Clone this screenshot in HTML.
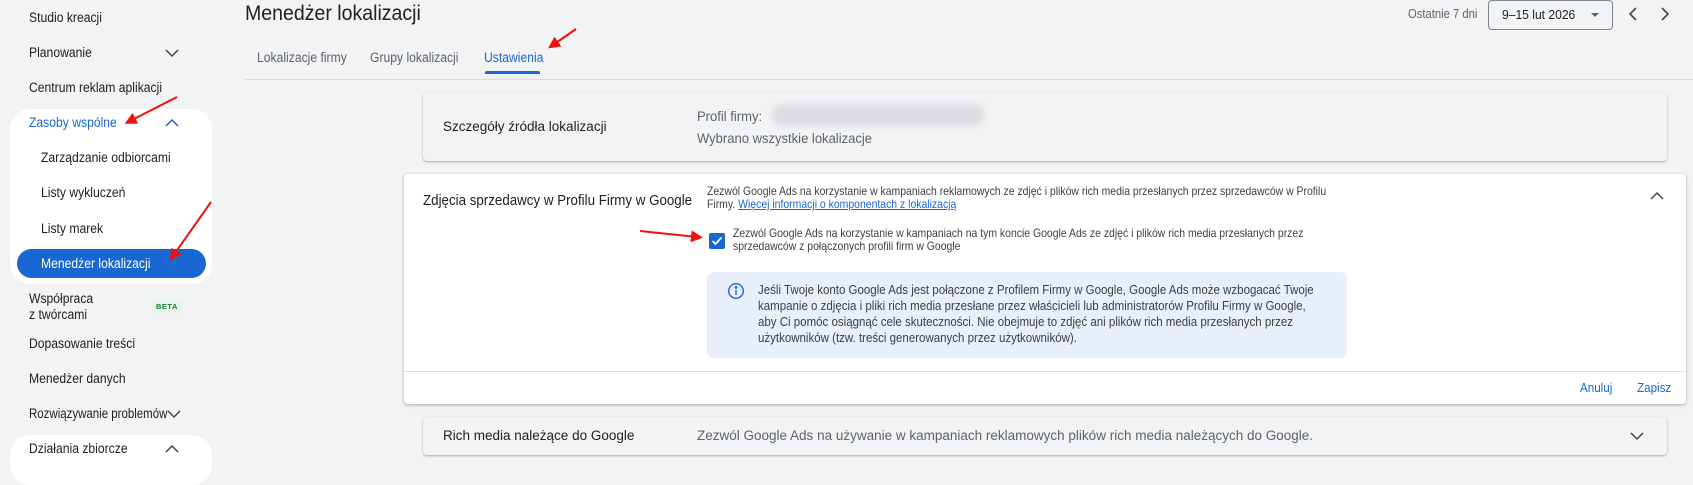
<!DOCTYPE html>
<html><head><meta charset="utf-8"><style>
*{box-sizing:border-box;margin:0;padding:0}
body{width:1693px;height:466px;overflow:hidden;background:#f1f3f4;font-family:"Liberation Sans",sans-serif;color:#202124;position:relative}
.a{position:absolute;white-space:nowrap}
.nav{font-size:13.5px;color:#202124;left:29px;line-height:16px}
.nav span,.c{display:inline-block;transform-origin:left center}
.nav span{transform:scaleX(.9)}
</style></head><body>
<!-- sidebar -->
<div class="a" style="left:10px;top:109px;width:202px;height:175px;background:#fff;border-radius:20px"></div>
<div class="a" style="left:10px;top:435px;width:202px;height:50px;background:#fff;border-radius:20px"></div>
<div class="a" style="left:17px;top:249px;width:189px;height:29px;background:#1967d2;border-radius:15px"></div>
<div class="a nav" style="top:10px"><span>Studio kreacji</span></div>
<div class="a nav" style="top:45px"><span>Planowanie</span></div>
<div class="a nav" style="top:80px"><span>Centrum reklam aplikacji</span></div>
<div class="a nav" style="top:115px;color:#1967d2"><span>Zasoby wspólne</span></div>
<div class="a nav" style="top:150px;left:41px"><span>Zarządzanie odbiorcami</span></div>
<div class="a nav" style="top:185px;left:41px"><span>Listy wykluczeń</span></div>
<div class="a nav" style="top:221px;left:41px"><span>Listy marek</span></div>
<div class="a nav" style="top:256px;left:41px;color:#fff"><span>Menedżer lokalizacji</span></div>
<div class="a nav" style="top:291px"><span>Współpraca</span></div>
<div class="a nav" style="top:307px"><span>z twórcami</span></div>
<div class="a" style="left:152px;top:300px;font-size:7.5px;color:#188038;background:#e6f4ea;padding:2px 4px;font-weight:bold;letter-spacing:.5px">BETA</div>
<div class="a nav" style="top:336px"><span>Dopasowanie treści</span></div>
<div class="a nav" style="top:371px"><span>Menedżer danych</span></div>
<div class="a nav" style="top:406px"><span style="transform:scaleX(.85)">Rozwiązywanie problemów</span></div>
<div class="a nav" style="top:441px"><span>Działania zbiorcze</span></div>
<svg class="a" style="left:0;top:0" width="220" height="466" fill="none" stroke="#444" stroke-width="1.5">
<path d="M166 50l6 6 6-6"/><path d="M168 411l6 6 6-6"/>
<path d="M166 126l6-6 6 6" stroke="#1967d2"/><path d="M166 452l6-6 6 6"/>
</svg>
<!-- header -->
<div class="a" style="left:245px;top:2px;font-size:21px;color:#202124"><span class="c" style="transform:scaleX(.93)">Menedżer lokalizacji</span></div>
<div class="a" style="left:257px;top:50px;font-size:13.5px;color:#5f6368"><span class="c" style="transform:scaleX(.9)">Lokalizacje firmy</span></div>
<div class="a" style="left:370px;top:50px;font-size:13.5px;color:#5f6368"><span class="c" style="transform:scaleX(.9)">Grupy lokalizacji</span></div>
<div class="a" style="left:484px;top:50px;font-size:13.5px;color:#1967d2"><span class="c" style="transform:scaleX(.9)">Ustawienia</span></div>
<div class="a" style="left:485px;top:71px;width:55px;height:3px;background:#1967d2;border-radius:2px 2px 0 0"></div>
<div class="a" style="left:245px;top:79px;width:1448px;height:1px;background:#dadce0"></div>
<div class="a" style="left:1408px;top:7px;font-size:12.5px;color:#5f6368"><span class="c" style="transform:scaleX(.9)">Ostatnie 7 dni</span></div>
<div class="a" style="left:1488px;top:0;width:125px;height:30px;border:1px solid #80868b;border-radius:4px"></div>
<div class="a" style="left:1502px;top:7px;font-size:13px"><span class="c" style="transform:scaleX(.93)">9–15 lut 2026</span></div>
<svg class="a" style="left:1580px;top:0" width="113" height="30" fill="none" stroke="#444" stroke-width="1.6">
<path d="M11 13l4 4 4-4z" fill="#5f6368" stroke="none"/>
<path d="M56 8l-6 6 6 6"/><path d="M82 8l6 6-6 6"/>
</svg>
<!-- card 1 -->
<div class="a" style="left:423px;top:93px;width:1244px;height:68px;background:#f1f3f4;border-radius:4px;box-shadow:0 1px 2px rgba(0,0,0,.3)"></div>
<div class="a" style="left:443px;top:119px;font-size:13.5px">Szczegóły źródła lokalizacji</div>
<div class="a" style="left:697px;top:108px;font-size:14px;color:#5f6368"><span class="c" style="transform:scaleX(.93)">Profil firmy:</span></div>
<div class="a" style="left:772px;top:104px;width:212px;height:22px;background:#dcdde0;border-radius:11px;filter:blur(3px)"></div>
<div class="a" style="left:697px;top:130px;font-size:14px;color:#5f6368"><span class="c" style="transform:scaleX(.93)">Wybrano wszystkie lokalizacje</span></div>
<!-- card 2 -->
<div class="a" style="left:404px;top:174px;width:1282px;height:230px;background:#fff;border-radius:4px;box-shadow:0 1px 3px rgba(0,0,0,.3)"></div>
<div class="a" style="left:423px;top:193px;font-size:14.5px"><span class="c" style="transform:scaleX(.92)">Zdjęcia sprzedawcy w Profilu Firmy w Google</span></div>
<div class="a" style="left:707px;top:185px;font-size:12px;line-height:13px;color:#3c4043"><span class="c" style="transform:scaleX(.87)">Zezwól Google Ads na korzystanie w kampaniach reklamowych ze zdjęć i plików rich media przesłanych przez sprzedawców w Profilu<br>Firmy. <span style="color:#1967d2;text-decoration:underline">Więcej informacji o komponentach z lokalizacją</span></span></div>
<div class="a" style="left:709px;top:233px;width:16px;height:16px;background:#1967d2;border-radius:2px"></div>
<svg class="a" style="left:709px;top:233px" width="16" height="16" fill="none" stroke="#fff" stroke-width="1.8"><path d="M3.5 8l3 3 6-6.5"/></svg>
<div class="a" style="left:733px;top:227px;font-size:12px;line-height:13px;color:#3c4043"><span class="c" style="transform:scaleX(.87)">Zezwól Google Ads na korzystanie w kampaniach na tym koncie Google Ads ze zdjęć i plików rich media przesłanych przez<br>sprzedawców z połączonych profili firm w Google</span></div>
<div class="a" style="left:707px;top:272px;width:640px;height:86px;background:#e8effb;border-radius:7px"></div>
<svg class="a" style="left:727px;top:282px" width="18" height="18" fill="none" stroke="#1967d2" stroke-width="1.4"><circle cx="9" cy="9" r="7.3"/><path d="M9 8v5"/><circle cx="9" cy="5.5" r=".7" fill="#1967d2"/></svg>
<div class="a" style="left:758px;top:282px;font-size:12.5px;line-height:16px;color:#3c4043"><span class="c" style="transform:scaleX(.92)">Jeśli Twoje konto Google Ads jest połączone z Profilem Firmy w Google, Google Ads może wzbogacać Twoje<br>kampanie o zdjęcia i pliki rich media przesłane przez właścicieli lub administratorów Profilu Firmy w Google,<br>aby Ci pomóc osiągnąć cele skuteczności. Nie obejmuje to zdjęć ani plików rich media przesłanych przez<br>użytkowników (tzw. treści generowanych przez użytkowników).</span></div>
<div class="a" style="left:404px;top:371px;width:1282px;height:1px;background:#e0e0e0"></div>
<div class="a" style="left:1580px;top:381px;font-size:12.5px;color:#1967d2"><span class="c" style="transform:scaleX(.93)">Anuluj</span></div>
<div class="a" style="left:1637px;top:381px;font-size:12.5px;color:#1967d2"><span class="c" style="transform:scaleX(.93)">Zapisz</span></div>
<svg class="a" style="left:1647px;top:186px" width="20" height="20" fill="none" stroke="#444" stroke-width="1.5"><path d="M4 13l6-6 6 6"/></svg>
<!-- card 3 -->
<div class="a" style="left:423px;top:417px;width:1244px;height:38px;background:#f1f3f4;border-radius:4px;box-shadow:0 1px 2px rgba(0,0,0,.3)"></div>
<div class="a" style="left:443px;top:428px;font-size:13.5px">Rich media należące do Google</div>
<div class="a" style="left:697px;top:428px;font-size:13.5px;color:#5f6368">Zezwól Google Ads na używanie w kampaniach reklamowych plików rich media należących do Google.</div>
<svg class="a" style="left:1627px;top:426px" width="20" height="20" fill="none" stroke="#444" stroke-width="1.5"><path d="M4 7l6 6 6-6"/></svg>
<!-- red arrows -->
<svg class="a" style="left:0;top:0" width="1693" height="466">
<defs><marker id="h" markerWidth="6" markerHeight="6" refX="3" refY="3" orient="auto"><path d="M0 0L6 3 0 6z" fill="#f01010"/></marker></defs>
<g stroke="#f01010" stroke-width="2" marker-end="url(#h)">
<line x1="177" y1="97" x2="130" y2="121"/>
<line x1="211" y1="202" x2="173" y2="256"/>
<line x1="576" y1="29" x2="553" y2="45"/>
<line x1="640" y1="231" x2="697" y2="237"/>
</g></svg>
</body></html>
